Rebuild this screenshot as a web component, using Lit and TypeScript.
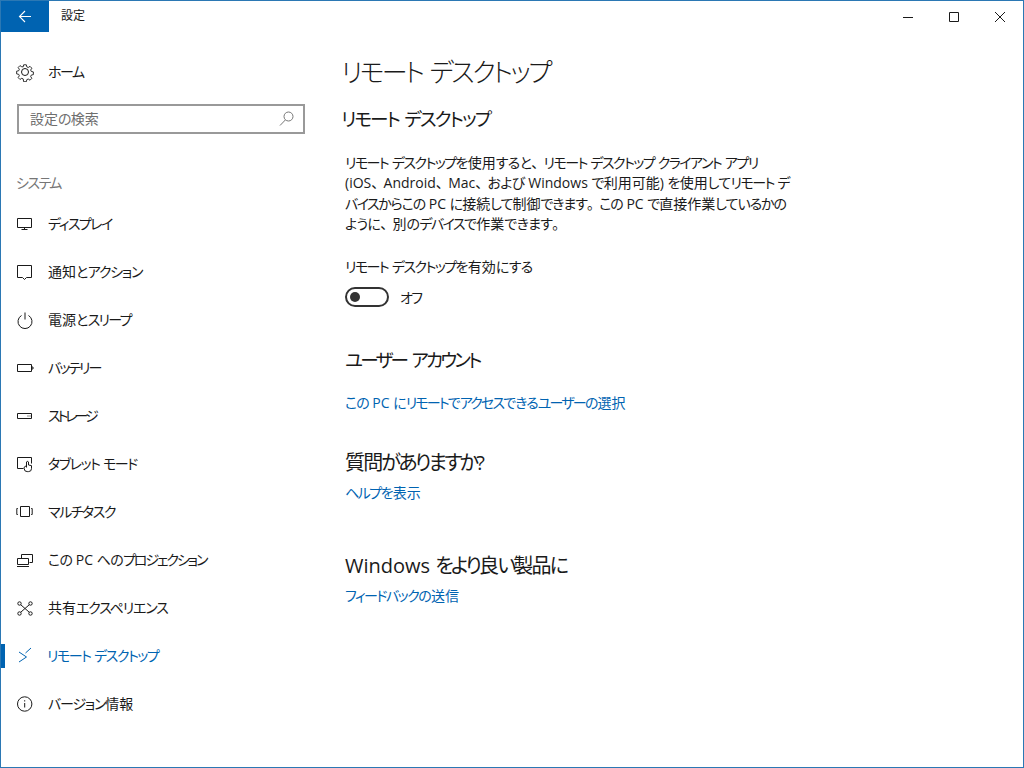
import { LitElement, html, css, svg } from "lit";
import { customElement } from "lit/decorators.js";

const ic = (body: unknown) => html`<svg class="ic" width="20" height="20" viewBox="0 0 20 20" fill="none" stroke="currentColor" stroke-width="1">${body}</svg>`;

const t = (s: string) =>
  (s.match(/[ァ-ヶー]+|[ぁ-ん]+|[、。]+|[一-龯]+|[^ァ-ヶーぁ-ん、。一-龯]+/g) || []).map((r) => {
    const c = /[ァ-ヶー]/.test(r[0]) ? "k" : /[ぁ-ん]/.test(r[0]) ? "h" : /[、。]/.test(r[0]) ? "p" : /[一-龯]/.test(r[0]) ? "j" : "";
    return c ? html`<span class=${c}>${r}</span>` : r;
  });

const items: [string, unknown, number, boolean?][] = [
  ["ディスプレイ", svg`<path d="M2.5 4.5h14v9h-14zM9.5 13.5v2M6.5 15.5h6"/>`, -0.11],
  ["通知とアクション", svg`<path d="M2.5 3.5h14v12h-5l-2 2-2-2h-5z"/>`, -0.085],
  ["電源とスリープ", svg`<path d="M6.500 5.500a7 7 0 1 0 7 0M10 2.500v7"/>`, -0.12],
  ["バッテリー", svg`<path d="M2.500 6.500h14v7h-14zM17 9h1v2h-1" />`, -0.14],
  ["ストレージ", svg`<path d="M2.500 7.500h14v5h-14zM12.500 10h1M14.500 10h1"/>`, -0.22],
  ["タブレット モード", svg`<path d="M8.500 14.500h-6v-11h14v6M11.500 8v5.500M11.500 8a1.100 1.100 0 0 1 2 0v3l3 .6v3a3 3 0 0 1-3 3h-1.300a3 3 0 0 1-3-3v-1.500l2.300-1.500"/>`, -0.105],
  ["マルチタスク", svg`<path d="M5.500 4.500h9v10h-9zM2.800 6.500h-1v6h1M16.200 6.500h1v6h-1"/>`, -0.105],
  ["この PC へのプロジェクション", svg`<path d="M6.500 8V4.500h11v8h-3M2.500 8.500h11v6h-11zM2 16.500h12"/>`, -0.15],
  ["共有エクスペリエンス", svg`<circle cx="4.500" cy="5.500" r="1.700"/><circle cx="15.500" cy="5.500" r="1.700"/><circle cx="4.500" cy="15.500" r="1.700"/><circle cx="15.500" cy="15.500" r="1.700"/><path d="M5.800 6.800l8.400 7.400M14.200 6.800l-8.400 7.400"/>`, -0.085],
  ["リモート デスクトップ", svg`<path d="M4 6l7.500 5L4 16M16 2l-5.500 5"/>`, -0.105, true],
  ["バージョン情報", svg`<circle cx="9.700" cy="10" r="7.200"/><path d="M9.700 9v4.500M9.700 6.200v1.300"/>`, -0.085],
];

@customElement("app-root")
export class AppRoot extends LitElement {
  static styles = css`
    :host {
      display: block; width: 1024px; height: 768px; box-sizing: border-box;
      border: 1px solid #2b78b4; background: #fff; color: #1a1a1a; overflow: hidden;
      font-family: "Open Sans", "Noto Sans CJK JP", sans-serif;
      font-size: 14px; position: relative;
    }
    .k { font-feature-settings: "palt"; letter-spacing: var(--k, -0.11em); font-size: var(--ks, 1em); }
    .h { font-feature-settings: "palt"; letter-spacing: var(--h, -0.05em); }
    .p { letter-spacing: -0.12em; }
    .j { letter-spacing: var(--j, 0); }
    .ic { display: block; flex: none; }
    .titlebar { display: flex; height: 31px; align-items: stretch; }
    .back { width: 48px; background: #0063b1; color: #fff; display: flex; align-items: center; justify-content: center; }
    .title { margin-left: 12px; font-size: 12px; line-height: 29px; flex: 1; }
    .win { display: flex; }
    .win div { width: 46px; display: flex; align-items: center; justify-content: center; }
    .body { display: flex; }
    .side { width: 320px; flex: none; }
    .home { display: flex; align-items: center; height: 48px; margin-top: 16px; padding-left: 14px; gap: 13px; }
    .search {
      margin: 8px 16px 0 16px; height: 30px; box-sizing: border-box; border: 2px solid #999;
      display: flex; align-items: center; justify-content: space-between; padding: 0 6px 0 11px; color: #6e6e6e;
    }
    .search svg { color: #777; }
    .txt { padding-bottom: 2px; }
    .group { margin: 38px 0 0 15px; color: #767676; line-height: 22px; height: 28px; }
    .item { display: flex; align-items: center; height: 48px; padding-left: 14px; gap: 13px; position: relative; white-space: nowrap; }
    .item.active { color: #0063b1; }
    .item.active .txt { margin-left: -1px; }
    .item.active::before { content: ""; position: absolute; left: 0; top: 12px; width: 4px; height: 24px; background: #0063b1; }
    .main { padding: 19px 0 0 24px; flex: 1; }
    h1 { margin: 0 0 0 -4px; font-weight: 300; font-size: 28px; line-height: 40px; --ks: 0.93em; --k: -0.1em; }
    h2 { margin: 0; font-weight: 400; font-size: 20px; line-height: 28px; --ks: 0.93em; --k: -0.1em; --h: -0.14em; --j: -0.09em; }
    h2.first { margin: 13px 0 0 -4px; }
    .desc { margin: 20px 0 0; line-height: 20.400px; white-space: nowrap; }
    .desc span.line { display: block; }
    .desc span.tight { --h: -0.075em; }
    .label { margin-top: 22px; line-height: 20px; }
    .toggle { display: flex; align-items: center; gap: 11px; margin-top: 9px; height: 22px; }
    .track { width: 44px; height: 20px; box-sizing: border-box; border: 2px solid #333; border-radius: 10px; display: flex; align-items: center; padding-left: 3px; }
    .knob { width: 10px; height: 10px; background: #333; border-radius: 50%; }
    a { color: #0063b1; text-decoration: none; display: block; line-height: 20px; }
    .s1 { margin-top: 38px; --k: -0.15em; }
    .s2 { margin-top: 36px; }
    .s3 { margin-top: 49px; }
    .l1 { margin-top: 19px; --k: -0.13em; --h: -0.07em; }
    .l2 { margin-top: 6px; }
  `;

  render() {
    return html`
      <div class="titlebar">
        <div class="back">${ic(svg`<path d="M16 9.500H4.500M10 4L4.500 9.500 10 15" stroke-width="1.100"/>`)}</div>
        <div class="title">設定</div>
        <div class="win">
          <div>${ic(svg`<path d="M5 10.500h10"/>`)}</div>
          <div>${ic(svg`<path d="M5.500 5.500h9v9h-9z"/>`)}</div>
          <div>${ic(svg`<path d="M5 5l10 10M15 5L5 15"/>`)}</div>
        </div>
      </div>
      <div class="body">
        <nav class="side">
          <div class="home">
            ${ic(svg`<circle cx="10" cy="10" r="3.500"/><path d="M8.500 2h3l.5 2.300 1.600.7 2-1.300 2 2.100-1.300 2 .7 1.600 2.300.5v3l-2.300.5-.7 1.600 1.300 2-2 2.100-2-1.300-1.600.7-.5 2.300h-3L8 17.700 6.400 17l-2 1.300-2-2.100 1.300-2-.7-1.600-2.300-.5v-3l2.300-.5.7-1.600-1.300-2 2-2.100 2 1.300L8 4.300z" transform="translate(1 1) scale(.9)"/>`)}
            <span class="txt">${t("ホーム")}</span>
          </div>
          <div class="search">
            <span class="txt">${t("設定の検索")}</span>
            ${ic(svg`<circle cx="11.500" cy="7.500" r="4.500"/><path d="M8.300 11L3 16.500"/>`)}
          </div>
          <div class="group">${t("システム")}</div>
          ${items.map(([s, i, k, a]) => html`<div class="item ${a ? "active" : ""}">${ic(i)}<span class="txt" style="--k:${k}em">${t(s)}</span></div>`)}
        </nav>
        <main class="main">
          <h1>${t("リモート デスクトップ")}</h1>
          <h2 class="first">${t("リモート デスクトップ")}</h2>
          <p class="desc">
            <span class="line">${t("リモート デスクトップを使用すると、リモート デスクトップ クライアント アプリ")}</span>
            <span class="line">${t("(iOS、Android、Mac、および Windows で利用可能) を使用してリモート デ")}</span>
            <span class="line tight">${t("バイスからこの PC に接続して制御できます。この PC で直接作業しているかの")}</span>
            <span class="line">${t("ように、別のデバイスで作業できます。")}</span>
          </p>
          <div class="label">${t("リモート デスクトップを有効にする")}</div>
          <div class="toggle"><div class="track"><div class="knob"></div></div><span>${t("オフ")}</span></div>
          <h2 class="s1">${t("ユーザー アカウント")}</h2>
          <a class="l1">${t("この PC にリモートでアクセスできるユーザーの選択")}</a>
          <h2 class="s2">${t("質問がありますか?")}</h2>
          <a class="l2">${t("ヘルプを表示")}</a>
          <h2 class="s3">${t("Windows をより良い製品に")}</h2>
          <a class="l2">${t("フィードバックの送信")}</a>
        </main>
      </div>
    `;
  }
}
